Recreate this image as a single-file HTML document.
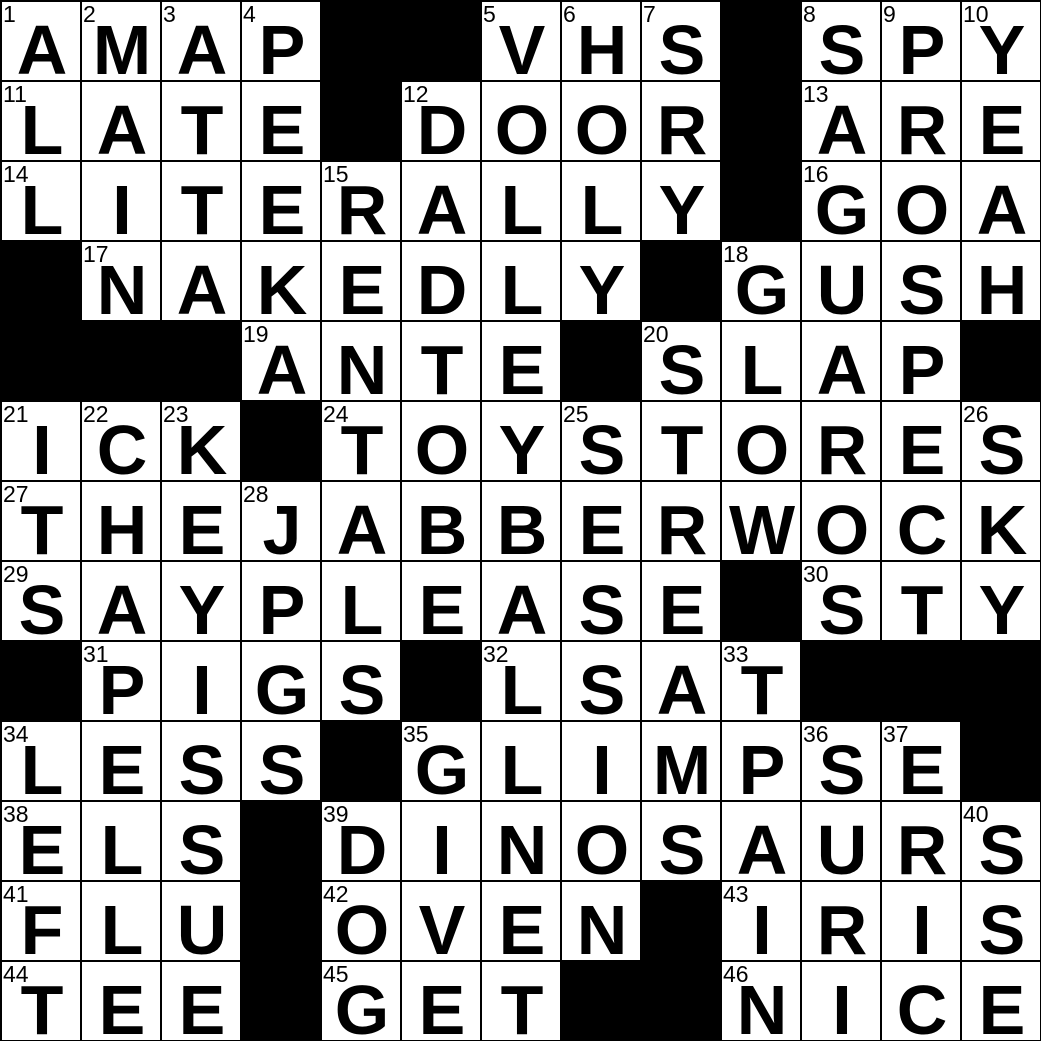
<!DOCTYPE html>
<html><head><style>
html,body{margin:0;padding:0;background:#fff}
#g{position:relative;width:1041px;height:1041px;background:#000;display:grid;grid-template-columns:repeat(13,78px);grid-auto-rows:78px;gap:2px;padding:2px 0 0 2px;box-sizing:border-box}
#g div{position:relative;background:#fff;overflow:visible}
#g div.b{background:#000}
#g div i{position:absolute;left:1px;top:1px;font:23px/23px "Liberation Sans",sans-serif;font-style:normal;color:#000}
#g div span{position:absolute;left:2px;right:0;top:13px;text-align:center;font:bold 70px/70px "Liberation Sans",sans-serif;color:#000}
</style></head><body><div id="g">
<div><i>1</i><span>A</span></div><div><i>2</i><span>M</span></div><div><i>3</i><span>A</span></div><div><i>4</i><span>P</span></div><div class="b"></div><div class="b"></div><div><i>5</i><span>V</span></div><div><i>6</i><span>H</span></div><div><i>7</i><span>S</span></div><div class="b"></div><div><i>8</i><span>S</span></div><div><i>9</i><span>P</span></div><div><i>10</i><span>Y</span></div>
<div><i>11</i><span>L</span></div><div><span>A</span></div><div><span>T</span></div><div><span>E</span></div><div class="b"></div><div><i>12</i><span>D</span></div><div><span>O</span></div><div><span>O</span></div><div><span>R</span></div><div class="b"></div><div><i>13</i><span>A</span></div><div><span>R</span></div><div><span>E</span></div>
<div><i>14</i><span>L</span></div><div><span>I</span></div><div><span>T</span></div><div><span>E</span></div><div><i>15</i><span>R</span></div><div><span>A</span></div><div><span>L</span></div><div><span>L</span></div><div><span>Y</span></div><div class="b"></div><div><i>16</i><span>G</span></div><div><span>O</span></div><div><span>A</span></div>
<div class="b"></div><div><i>17</i><span>N</span></div><div><span>A</span></div><div><span>K</span></div><div><span>E</span></div><div><span>D</span></div><div><span>L</span></div><div><span>Y</span></div><div class="b"></div><div><i>18</i><span>G</span></div><div><span>U</span></div><div><span>S</span></div><div><span>H</span></div>
<div class="b"></div><div class="b"></div><div class="b"></div><div><i>19</i><span>A</span></div><div><span>N</span></div><div><span>T</span></div><div><span>E</span></div><div class="b"></div><div><i>20</i><span>S</span></div><div><span>L</span></div><div><span>A</span></div><div><span>P</span></div><div class="b"></div>
<div><i>21</i><span>I</span></div><div><i>22</i><span>C</span></div><div><i>23</i><span>K</span></div><div class="b"></div><div><i>24</i><span>T</span></div><div><span>O</span></div><div><span>Y</span></div><div><i>25</i><span>S</span></div><div><span>T</span></div><div><span>O</span></div><div><span>R</span></div><div><span>E</span></div><div><i>26</i><span>S</span></div>
<div><i>27</i><span>T</span></div><div><span>H</span></div><div><span>E</span></div><div><i>28</i><span>J</span></div><div><span>A</span></div><div><span>B</span></div><div><span>B</span></div><div><span>E</span></div><div><span>R</span></div><div><span>W</span></div><div><span>O</span></div><div><span>C</span></div><div><span>K</span></div>
<div><i>29</i><span>S</span></div><div><span>A</span></div><div><span>Y</span></div><div><span>P</span></div><div><span>L</span></div><div><span>E</span></div><div><span>A</span></div><div><span>S</span></div><div><span>E</span></div><div class="b"></div><div><i>30</i><span>S</span></div><div><span>T</span></div><div><span>Y</span></div>
<div class="b"></div><div><i>31</i><span>P</span></div><div><span>I</span></div><div><span>G</span></div><div><span>S</span></div><div class="b"></div><div><i>32</i><span>L</span></div><div><span>S</span></div><div><span>A</span></div><div><i>33</i><span>T</span></div><div class="b"></div><div class="b"></div><div class="b"></div>
<div><i>34</i><span>L</span></div><div><span>E</span></div><div><span>S</span></div><div><span>S</span></div><div class="b"></div><div><i>35</i><span>G</span></div><div><span>L</span></div><div><span>I</span></div><div><span>M</span></div><div><span>P</span></div><div><i>36</i><span>S</span></div><div><i>37</i><span>E</span></div><div class="b"></div>
<div><i>38</i><span>E</span></div><div><span>L</span></div><div><span>S</span></div><div class="b"></div><div><i>39</i><span>D</span></div><div><span>I</span></div><div><span>N</span></div><div><span>O</span></div><div><span>S</span></div><div><span>A</span></div><div><span>U</span></div><div><span>R</span></div><div><i>40</i><span>S</span></div>
<div><i>41</i><span>F</span></div><div><span>L</span></div><div><span>U</span></div><div class="b"></div><div><i>42</i><span>O</span></div><div><span>V</span></div><div><span>E</span></div><div><span>N</span></div><div class="b"></div><div><i>43</i><span>I</span></div><div><span>R</span></div><div><span>I</span></div><div><span>S</span></div>
<div><i>44</i><span>T</span></div><div><span>E</span></div><div><span>E</span></div><div class="b"></div><div><i>45</i><span>G</span></div><div><span>E</span></div><div><span>T</span></div><div class="b"></div><div class="b"></div><div><i>46</i><span>N</span></div><div><span>I</span></div><div><span>C</span></div><div><span>E</span></div>
</div></body></html>
